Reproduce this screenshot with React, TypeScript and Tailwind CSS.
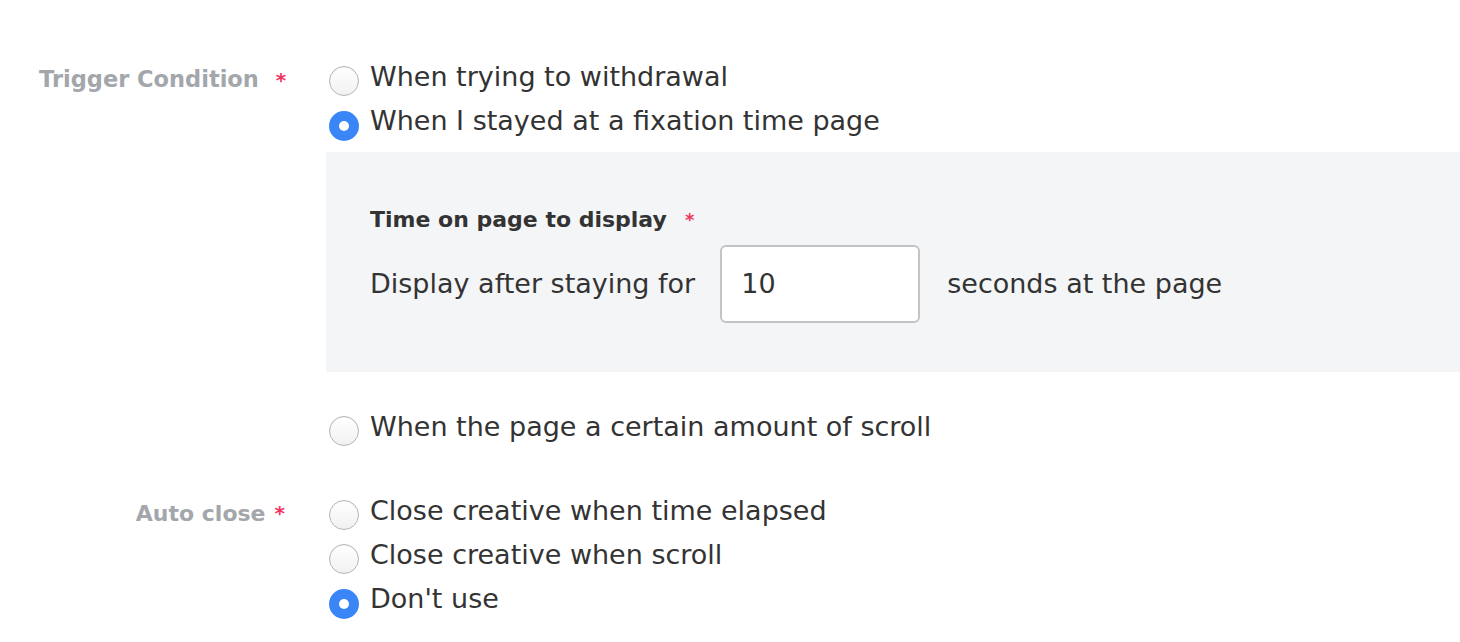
import React from "react";

function Radio({ checked, label }: { checked?: boolean; label: string }) {
  return (
    <div className="flex h-[44px] items-center">
      {checked ? (
        <span className="mt-[7px] flex h-[30px] w-[30px] shrink-0 items-center justify-center rounded-full bg-[#3a86f6]">
          <span className="h-[10px] w-[10px] rounded-full bg-white" />
        </span>
      ) : (
        <span className="mt-[5px] h-[30px] w-[30px] shrink-0 rounded-full border border-[#b5b5b5] bg-gradient-to-b from-white to-[#f1f1f1] shadow-[inset_0_1px_1px_rgba(0,0,0,0.05)]" />
      )}
      <span className="mb-[3px] ml-[11px] text-[27px] leading-none text-[#333333]">{label}</span>
    </div>
  );
}

export default function App() {
  return (
    <div
      className="h-[642px] w-[1460px] overflow-hidden bg-white pt-[56px]"
      style={{ fontFamily: '"DejaVu Sans", "Noto Sans", sans-serif' }}
    >
      <div className="flex">
        <div className="flex h-[44px] w-[329px] shrink-0 items-center pl-[39px] pt-[4px]">
          <span className="text-[22.5px] font-bold text-[#a3a7ab]">Trigger Condition</span>
          <span className="ml-[17px] text-[20px] font-bold text-[#f0355f]">*</span>
        </div>
        <div className="flex-1">
          <Radio label="When trying to withdrawal" />
          <Radio checked label="When I stayed at a fixation time page" />
          <div className="-ml-[3px] mt-[8px] h-[220px] bg-[#f4f5f7] pl-[44px] pt-[52px]">
            <div className="flex h-[30px] items-center">
              <span className="text-[22px] font-bold text-[#333333]">Time on page to display</span>
              <span className="ml-[18px] text-[18px] font-bold text-[#f0355f]">*</span>
            </div>
            <div className="mt-[11px] flex items-center">
              <span className="text-[27px] text-[#333333]">Display after staying for</span>
              <div className="ml-[25px] flex h-[78px] w-[200px] items-center rounded-[6px] border-2 border-[#c4c4c4] bg-white pl-[19px] text-[27px] text-[#333333]">
                10
              </div>
              <span className="ml-[27px] text-[27px] text-[#333333]">seconds at the page</span>
            </div>
          </div>
          <div className="mt-[34px]">
            <Radio label="When the page a certain amount of scroll" />
          </div>
        </div>
      </div>
      <div className="mt-[40px] flex">
        <div className="flex h-[44px] w-[329px] shrink-0 items-center justify-end pr-[44px] pt-[2px]">
          <span className="text-[22px] font-bold text-[#a3a7ab]">Auto close</span>
          <span className="ml-[9px] text-[20px] font-bold text-[#f0355f]">*</span>
        </div>
        <div className="flex-1">
          <Radio label="Close creative when time elapsed" />
          <Radio label="Close creative when scroll" />
          <Radio checked label="Don't use" />
        </div>
      </div>
    </div>
  );
}
